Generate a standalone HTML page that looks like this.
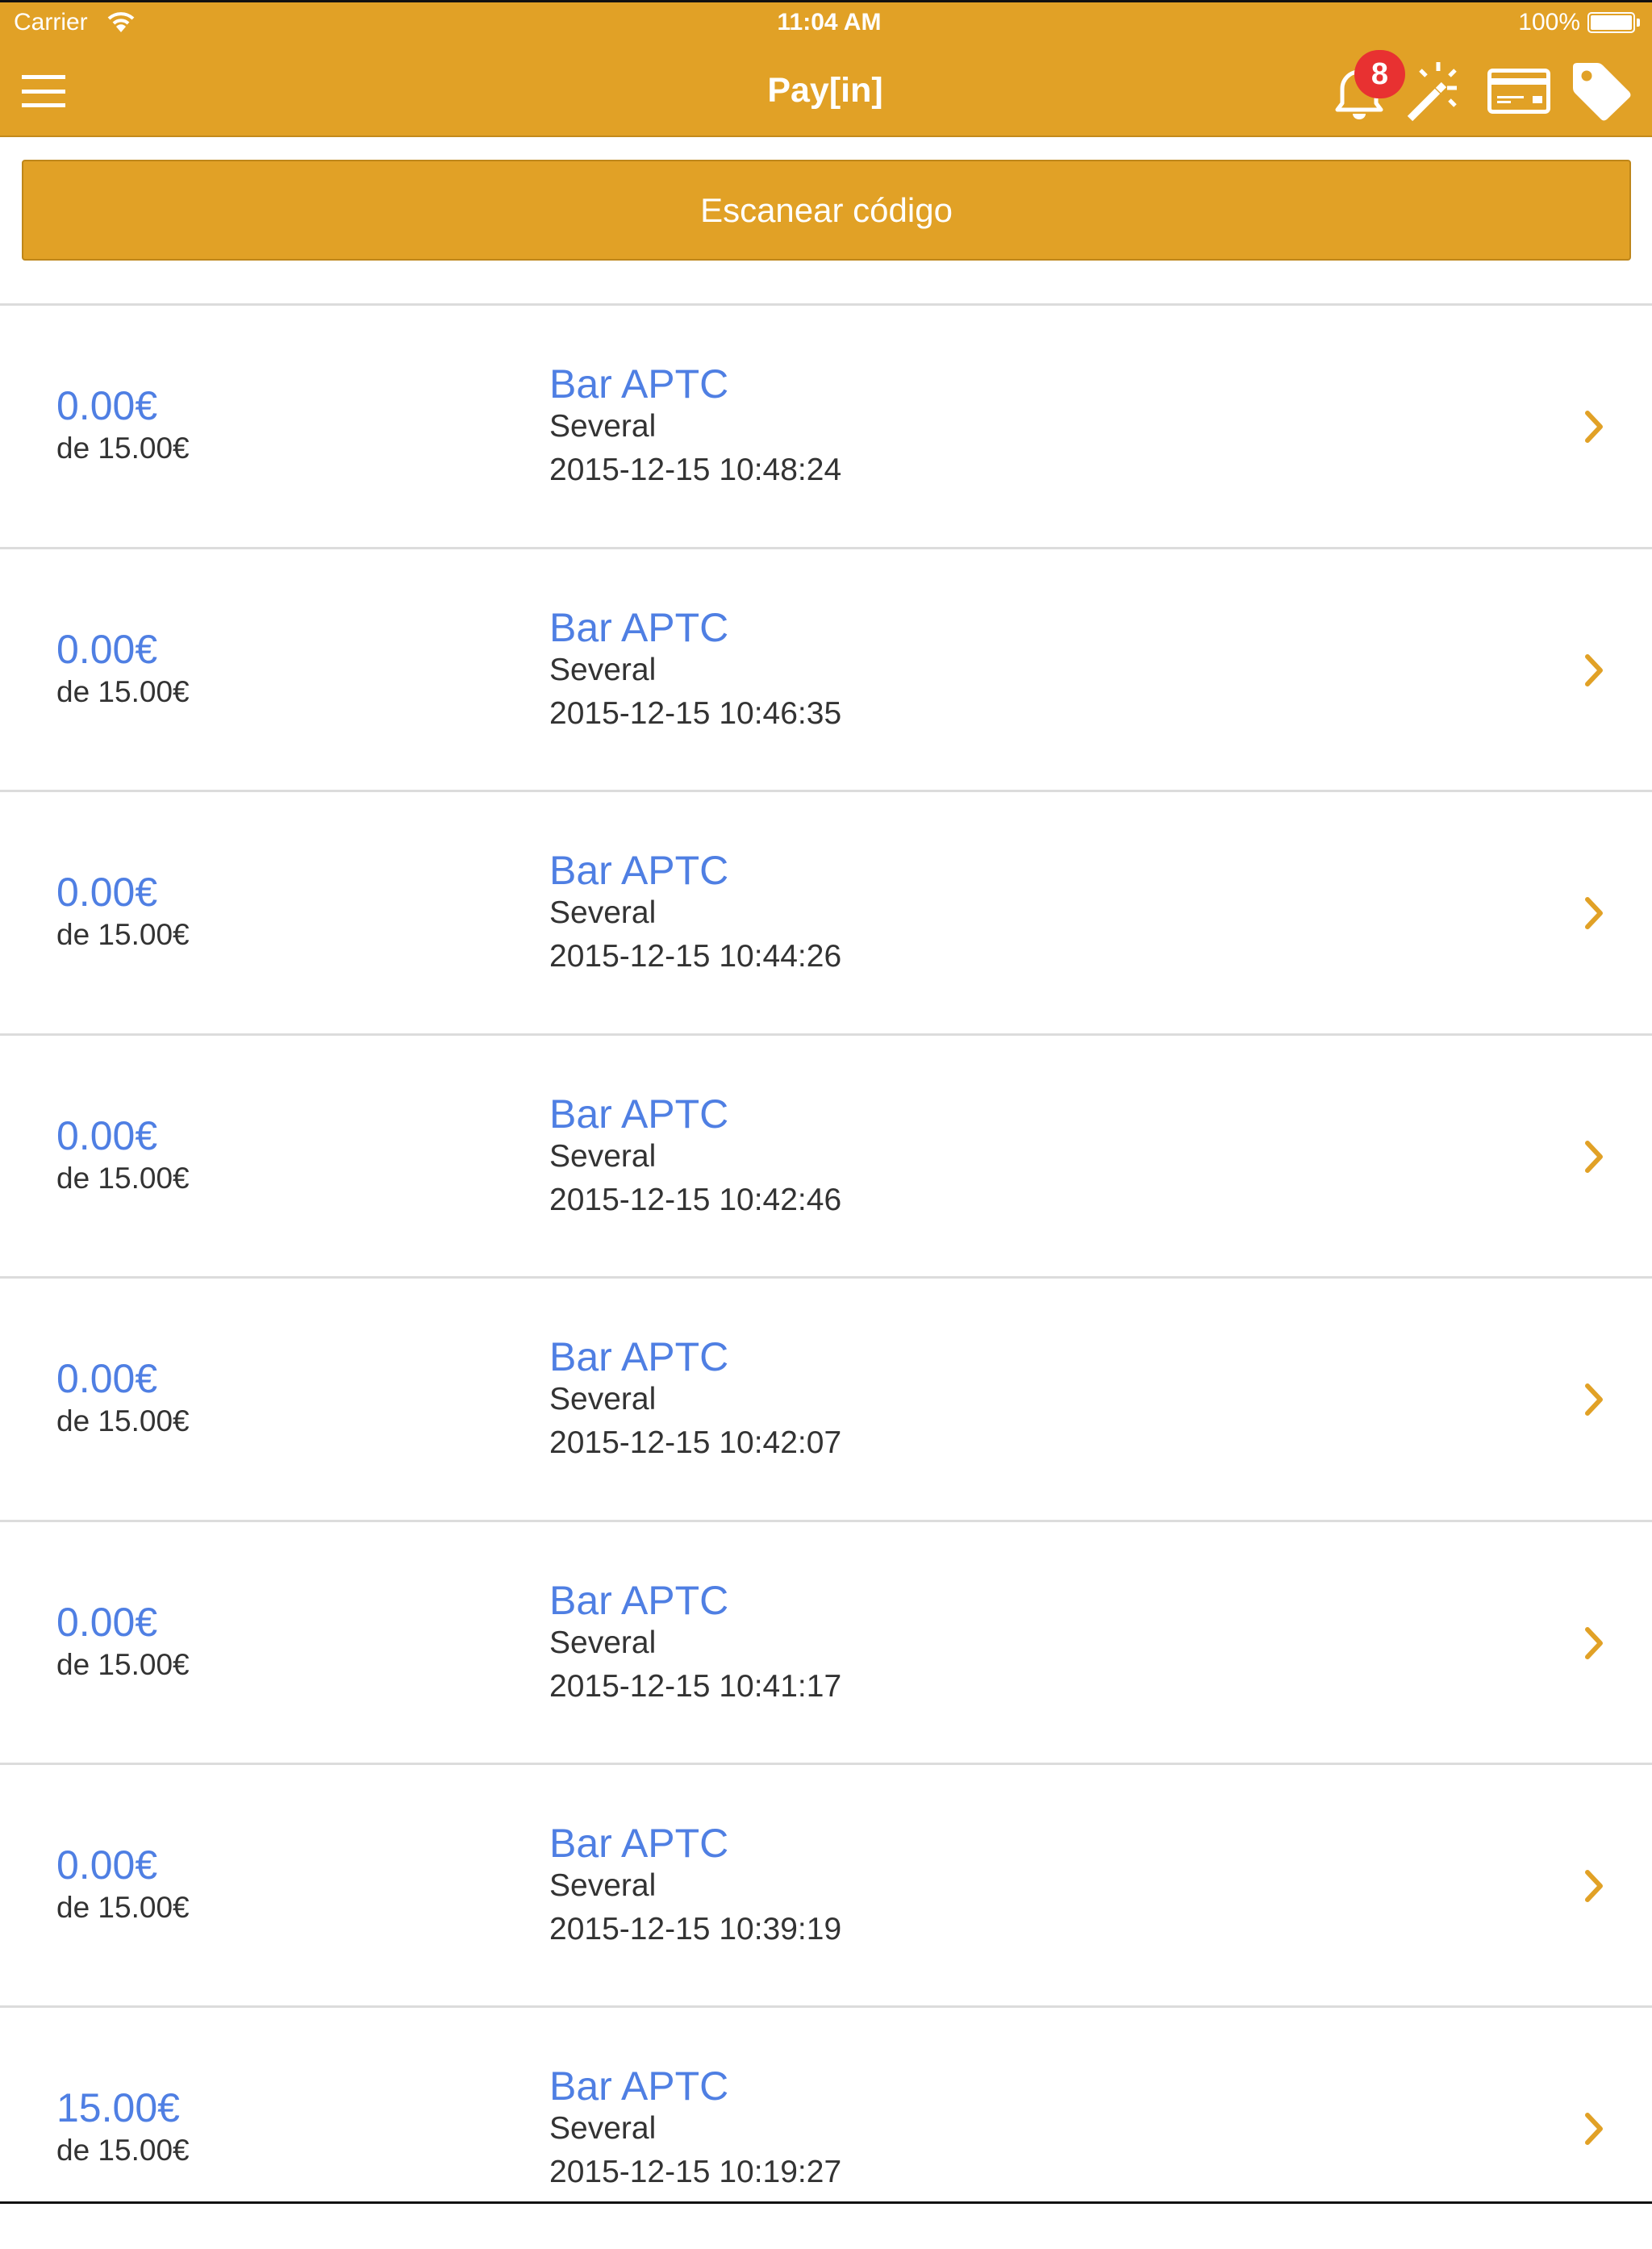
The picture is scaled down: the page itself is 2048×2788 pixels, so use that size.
<!DOCTYPE html>
<html><head><meta charset="utf-8"><style>
*{margin:0;padding:0;box-sizing:border-box}
body{width:2048px;height:2732px;background:#fff;position:relative;overflow:hidden;font-family:"Liberation Sans",sans-serif}
.a{position:absolute;white-space:nowrap}
.nav{position:absolute;left:0;top:0;width:2048px;height:170px;background:#E1A126;border-bottom:2px solid #C38a1c}
.btn{position:absolute;left:27px;top:198px;width:1995px;height:125px;background:#E1A126;border:2px solid #BE861a;border-radius:4px;color:#fff;font-size:42px;text-align:center;line-height:121px}
.sep{position:absolute;left:0;width:2048px;height:3px;background:#dcdcdc}
.row{position:absolute;left:0;width:2048px;height:301px}
.amt{left:70px;top:101px;font-size:50px;line-height:50px;color:#4F7FE3}
.de{left:70px;top:160px;font-size:37px;line-height:37px;color:#333}
.bar{left:681px;top:74px;font-size:50px;line-height:50px;color:#4F7FE3}
.sv{left:681px;top:132px;font-size:39px;line-height:39px;color:#333}
.dt{left:681px;top:186px;font-size:39px;line-height:39px;color:#333}
.chev{position:absolute;left:1958px;top:130px}
</style></head><body>
<div style="position:absolute;left:0;top:0;width:2048px;height:3px;background:#111;z-index:5"></div>
<div style="position:absolute;left:0;bottom:0;width:2048px;height:3px;background:#111;z-index:5"></div>
<div class="nav">
<div class="a" style="left:17px;top:13px;font-size:30px;line-height:30px;color:#fff">Carrier</div>
<svg class="a" style="left:132px;top:12px" width="36" height="30" viewBox="0 0 36 30"><path d="M3 11 A22 22 0 0 1 33 11" stroke="#fff" stroke-width="4" fill="none"/><path d="M9 17 A13 13 0 0 1 27 17" stroke="#fff" stroke-width="4" fill="none"/><path d="M18 28 L12 21 A8 8 0 0 1 24 21 Z" fill="#fff"/></svg>
<div class="a" style="left:0;width:2056px;text-align:center;top:13px;font-size:30px;line-height:30px;color:#fff;font-weight:bold">11:04 AM</div>
<div class="a" style="right:89px;top:13px;font-size:30px;line-height:30px;color:#fff">100%</div>
<div class="a" style="left:1968px;top:15px;width:59px;height:26px;border:2px solid #fff;border-radius:5px;padding:2px"><div style="width:100%;height:100%;background:#fff;border-radius:2px"></div></div>
<div class="a" style="left:2029px;top:23px;width:4px;height:10px;background:#fff;border-radius:0 2px 2px 0"></div>
<div class="a" style="left:27px;top:93px;width:54px;height:5px;background:#fff"></div>
<div class="a" style="left:27px;top:111px;width:54px;height:5px;background:#fff"></div>
<div class="a" style="left:27px;top:128px;width:54px;height:5px;background:#fff"></div>
<div class="a" style="left:0;width:2046px;text-align:center;top:91px;font-size:43px;line-height:43px;color:#fff;font-weight:bold">Pay[in]</div>
<svg class="a" style="left:1650px;top:78px" width="70" height="72" viewBox="0 0 70 72"><path d="M8 58 L62 58 L56 50 L56 32 A21 21 0 0 0 14 32 L14 50 Z" stroke="#fff" stroke-width="5" fill="none" stroke-linejoin="round"/><path d="M27 63 A8 7 0 0 0 43 63 Z" fill="#fff"/></svg>
<div class="a" style="left:1679px;top:62px;width:63px;height:60px;border-radius:30px;background:#E83131;color:#fff;font-weight:bold;font-size:38px;line-height:60px;text-align:center">8</div>
<svg class="a" style="left:1742px;top:74px" width="80" height="80" viewBox="0 0 80 80"><path d="M6 73 L40 39" stroke="#fff" stroke-width="9"/><path d="M41 38 L48 31" stroke="#fff" stroke-width="9"/><path d="M41 3 V14 M19 13 L26 20 M62 13 L55 20 M52 35 H64 M55 50 L62 57" stroke="#fff" stroke-width="5"/></svg>
<svg class="a" style="left:1844px;top:85px" width="78" height="56" viewBox="0 0 78 56"><rect x="2.5" y="2.5" width="73" height="51" rx="4" stroke="#fff" stroke-width="5" fill="none"/><rect x="2" y="12" width="74" height="8" fill="#fff"/><rect x="12" y="34" width="33" height="3" fill="#fff"/><rect x="12" y="40" width="17" height="3" fill="#fff"/><rect x="56" y="34" width="12" height="9" fill="#fff"/></svg>
<svg class="a" style="left:1946px;top:75px" width="78" height="76" viewBox="0 0 78 76"><path d="M4 8 Q4 3 9 3 L34 3 Q38 3 41 6 L74 39 Q77 43 74 46 L46 73 Q42 76 39 73 L7 41 Q4 38 4 34 Z" fill="#fff"/><circle cx="21" cy="19" r="6.5" fill="#E1A126"/></svg>
</div>
<div class="btn">Escanear código</div>

<div class="sep" style="top:376px"></div>
<div class="row" style="top:377px"><div class="a amt">0.00€</div><div class="a de">de 15.00€</div><div class="a bar">Bar APTC</div><div class="a sv">Several</div><div class="a dt">2015-12-15 10:48:24</div><svg class="chev" width="36" height="44" viewBox="0 0 36 44"><path d="M10 5 L26 22 L10 39" stroke="#E1A126" stroke-width="6" fill="none" stroke-linecap="round" stroke-linejoin="round"/></svg></div>
<div class="sep" style="top:678px"></div>
<div class="row" style="top:679px"><div class="a amt">0.00€</div><div class="a de">de 15.00€</div><div class="a bar">Bar APTC</div><div class="a sv">Several</div><div class="a dt">2015-12-15 10:46:35</div><svg class="chev" width="36" height="44" viewBox="0 0 36 44"><path d="M10 5 L26 22 L10 39" stroke="#E1A126" stroke-width="6" fill="none" stroke-linecap="round" stroke-linejoin="round"/></svg></div>
<div class="sep" style="top:979px"></div>
<div class="row" style="top:980px"><div class="a amt">0.00€</div><div class="a de">de 15.00€</div><div class="a bar">Bar APTC</div><div class="a sv">Several</div><div class="a dt">2015-12-15 10:44:26</div><svg class="chev" width="36" height="44" viewBox="0 0 36 44"><path d="M10 5 L26 22 L10 39" stroke="#E1A126" stroke-width="6" fill="none" stroke-linecap="round" stroke-linejoin="round"/></svg></div>
<div class="sep" style="top:1281px"></div>
<div class="row" style="top:1282px"><div class="a amt">0.00€</div><div class="a de">de 15.00€</div><div class="a bar">Bar APTC</div><div class="a sv">Several</div><div class="a dt">2015-12-15 10:42:46</div><svg class="chev" width="36" height="44" viewBox="0 0 36 44"><path d="M10 5 L26 22 L10 39" stroke="#E1A126" stroke-width="6" fill="none" stroke-linecap="round" stroke-linejoin="round"/></svg></div>
<div class="sep" style="top:1582px"></div>
<div class="row" style="top:1583px"><div class="a amt">0.00€</div><div class="a de">de 15.00€</div><div class="a bar">Bar APTC</div><div class="a sv">Several</div><div class="a dt">2015-12-15 10:42:07</div><svg class="chev" width="36" height="44" viewBox="0 0 36 44"><path d="M10 5 L26 22 L10 39" stroke="#E1A126" stroke-width="6" fill="none" stroke-linecap="round" stroke-linejoin="round"/></svg></div>
<div class="sep" style="top:1884px"></div>
<div class="row" style="top:1885px"><div class="a amt">0.00€</div><div class="a de">de 15.00€</div><div class="a bar">Bar APTC</div><div class="a sv">Several</div><div class="a dt">2015-12-15 10:41:17</div><svg class="chev" width="36" height="44" viewBox="0 0 36 44"><path d="M10 5 L26 22 L10 39" stroke="#E1A126" stroke-width="6" fill="none" stroke-linecap="round" stroke-linejoin="round"/></svg></div>
<div class="sep" style="top:2185px"></div>
<div class="row" style="top:2186px"><div class="a amt">0.00€</div><div class="a de">de 15.00€</div><div class="a bar">Bar APTC</div><div class="a sv">Several</div><div class="a dt">2015-12-15 10:39:19</div><svg class="chev" width="36" height="44" viewBox="0 0 36 44"><path d="M10 5 L26 22 L10 39" stroke="#E1A126" stroke-width="6" fill="none" stroke-linecap="round" stroke-linejoin="round"/></svg></div>
<div class="sep" style="top:2486px"></div>
<div class="row" style="top:2487px"><div class="a amt">15.00€</div><div class="a de">de 15.00€</div><div class="a bar">Bar APTC</div><div class="a sv">Several</div><div class="a dt">2015-12-15 10:19:27</div><svg class="chev" width="36" height="44" viewBox="0 0 36 44"><path d="M10 5 L26 22 L10 39" stroke="#E1A126" stroke-width="6" fill="none" stroke-linecap="round" stroke-linejoin="round"/></svg></div>
</body></html>
